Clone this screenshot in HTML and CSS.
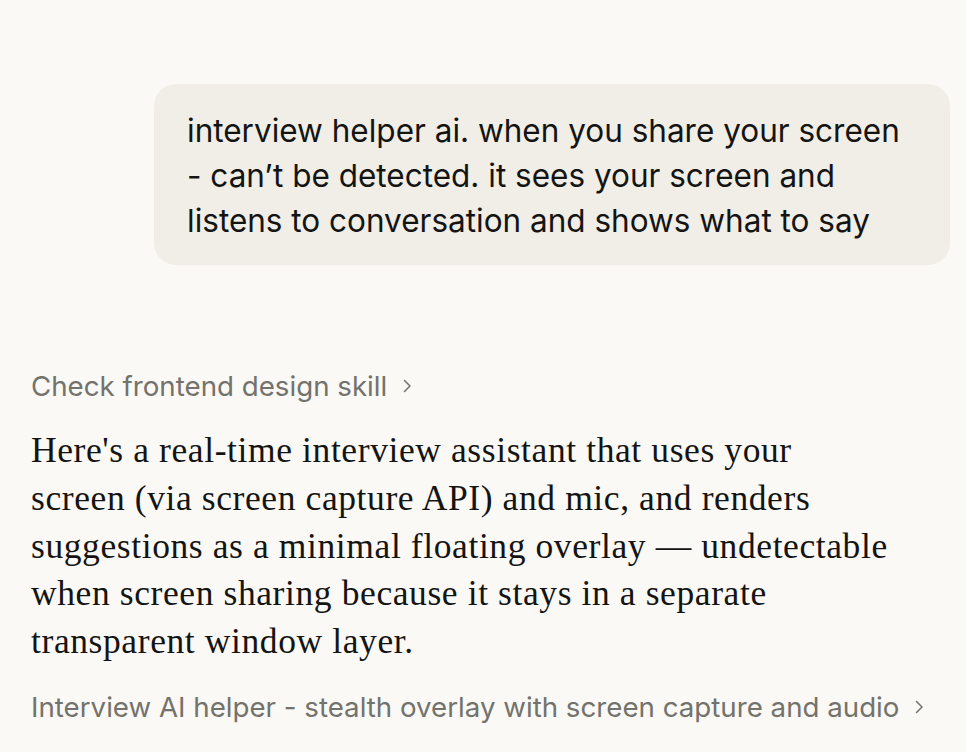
FILE: index.html
```html
<!DOCTYPE html>
<html>
<head>
<meta charset="utf-8">
<link rel="stylesheet" href="styles.css">
</head>
<body>
<div class="chat">
  <div class="user-row">
    <div class="bubble">interview helper ai. when you share your screen<br>- can’t be detected. it sees your screen and<br>listens to conversation and shows what to say</div>
  </div>
  <div class="reply">
    <div class="step">Check frontend design skill <svg class="chev" width="16" height="16" viewBox="0 0 16 16"><path d="M5.5 2.5 L11 8 L5.5 13.5" fill="none" stroke="currentColor" stroke-width="1.5" stroke-linecap="round" stroke-linejoin="round"/></svg></div>
    <p class="answer">Here's a real-time interview assistant that uses your<br>screen (via screen capture API) and mic, and renders<br>suggestions as a minimal floating overlay — undetectable<br>when screen sharing because it stays in a separate<br>transparent window layer.</p>
    <div class="step">Interview AI helper - stealth overlay with screen capture and audio <svg class="chev" width="16" height="16" viewBox="0 0 16 16"><path d="M5.5 2.5 L11 8 L5.5 13.5" fill="none" stroke="currentColor" stroke-width="1.5" stroke-linecap="round" stroke-linejoin="round"/></svg></div>
  </div>
</div>
</body>
</html>
```
FILE: styles.css
```css
html, body {
  margin: 0;
  padding: 0;
  background: #faf9f5;
}
.chat {
  padding: 84px 16px 0 31px;
}
.user-row {
  display: flex;
  justify-content: flex-end;
}
.bubble {
  width: 733px;
  background: #f0eee6;
  border-radius: 22px;
  padding: 24px 30px 22px 33px;
  font-family: Inter, "Noto Sans", sans-serif;
  font-size: 31.5px;
  line-height: 45px;
  color: #141413;
  white-space: nowrap;
}
.reply {
  margin-top: 103px;
}
.step {
  display: flex;
  align-items: center;
  gap: 12px;
  font-family: Inter, "Noto Sans", sans-serif;
  font-size: 27.7px;
  line-height: 36px;
  color: #73726c;
}
.chev {
  color: #73726c;
  flex: none;
}
.answer {
  margin: 23px 0 23px 0;
  font-family: "Liberation Serif", serif;
  font-size: 35.5px;
  letter-spacing: 0.6px;
  line-height: 47.8px;
  color: #141413;
  white-space: nowrap;
}
```
